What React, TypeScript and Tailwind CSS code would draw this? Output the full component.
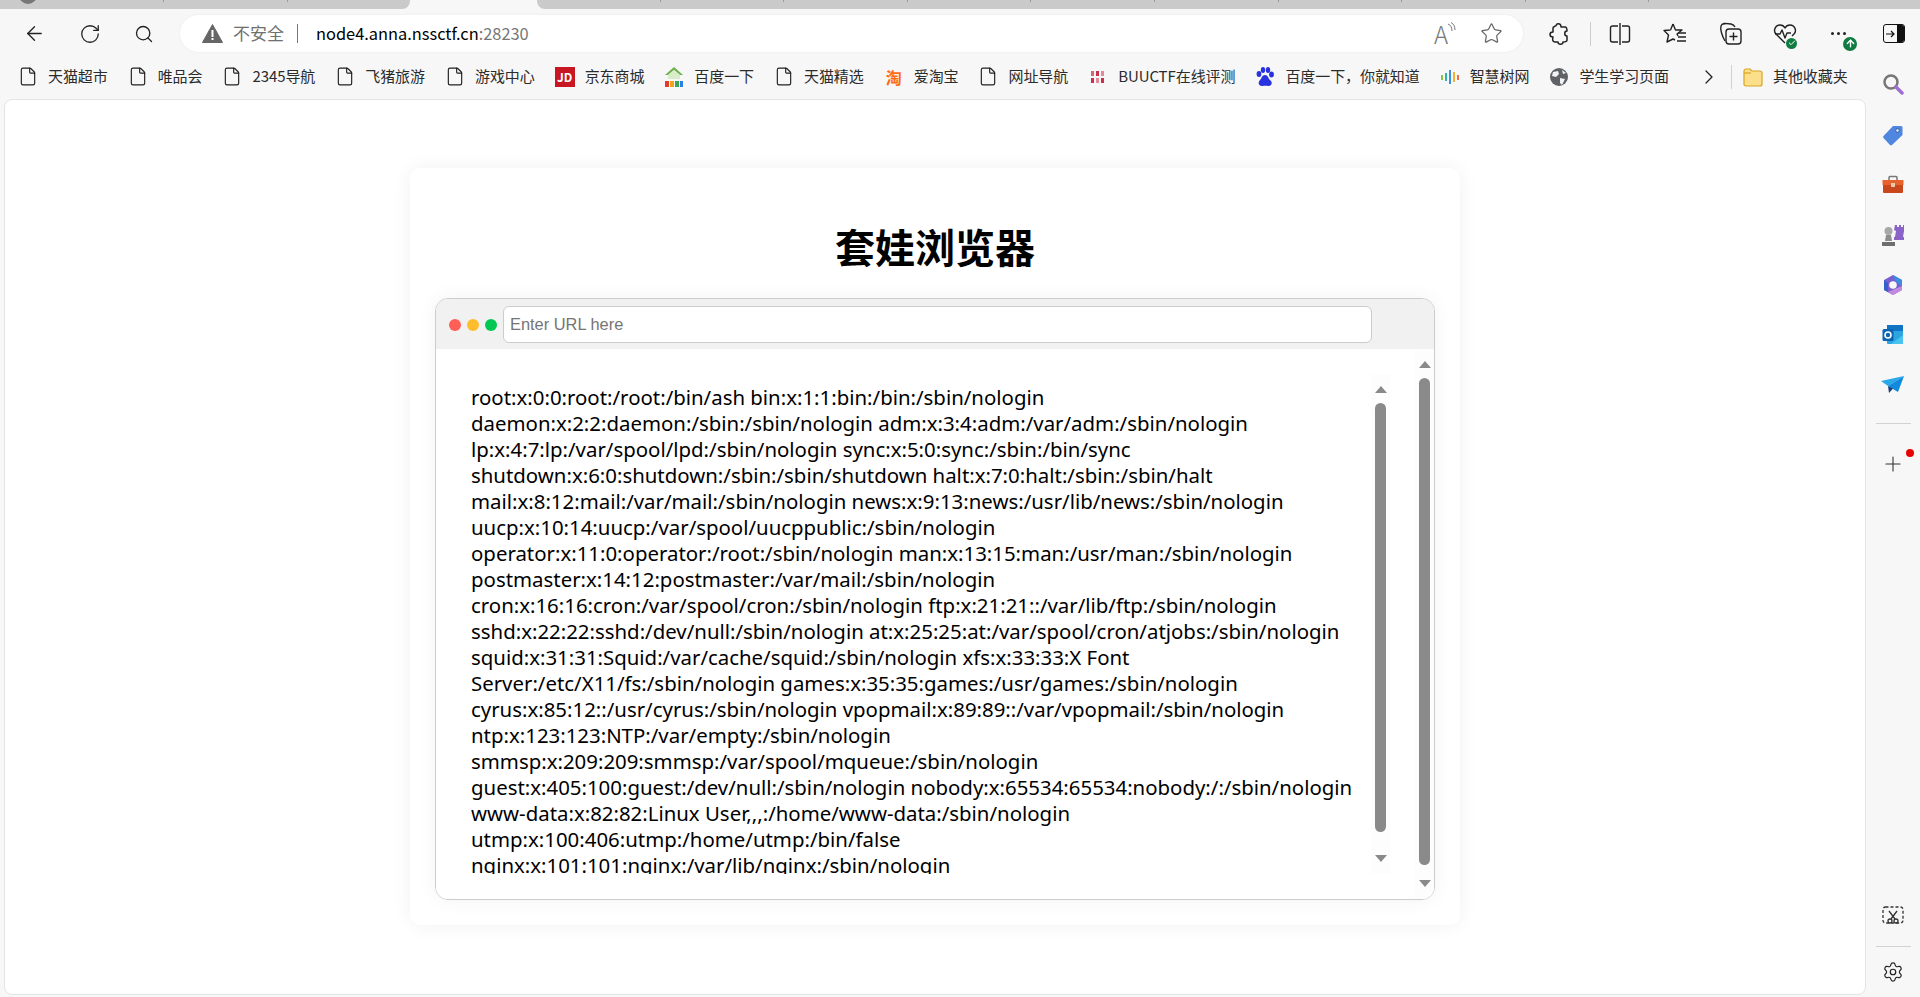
import React from 'react';
import { ArrowLeft, RotateCw, Search, Star, File, ChevronRight, Plus, Settings, Check, ArrowUp } from 'lucide-react';

const passwd = [
  'root:x:0:0:root:/root:/bin/ash bin:x:1:1:bin:/bin:/sbin/nologin',
  'daemon:x:2:2:daemon:/sbin:/sbin/nologin adm:x:3:4:adm:/var/adm:/sbin/nologin',
  'lp:x:4:7:lp:/var/spool/lpd:/sbin/nologin sync:x:5:0:sync:/sbin:/bin/sync',
  'shutdown:x:6:0:shutdown:/sbin:/sbin/shutdown halt:x:7:0:halt:/sbin:/sbin/halt',
  'mail:x:8:12:mail:/var/mail:/sbin/nologin news:x:9:13:news:/usr/lib/news:/sbin/nologin',
  'uucp:x:10:14:uucp:/var/spool/uucppublic:/sbin/nologin',
  'operator:x:11:0:operator:/root:/sbin/nologin man:x:13:15:man:/usr/man:/sbin/nologin',
  'postmaster:x:14:12:postmaster:/var/mail:/sbin/nologin',
  'cron:x:16:16:cron:/var/spool/cron:/sbin/nologin ftp:x:21:21::/var/lib/ftp:/sbin/nologin',
  'sshd:x:22:22:sshd:/dev/null:/sbin/nologin at:x:25:25:at:/var/spool/cron/atjobs:/sbin/nologin',
  'squid:x:31:31:Squid:/var/cache/squid:/sbin/nologin xfs:x:33:33:X Font',
  'Server:/etc/X11/fs:/sbin/nologin games:x:35:35:games:/usr/games:/sbin/nologin',
  'cyrus:x:85:12::/usr/cyrus:/sbin/nologin vpopmail:x:89:89::/var/vpopmail:/sbin/nologin',
  'ntp:x:123:123:NTP:/var/empty:/sbin/nologin',
  'smmsp:x:209:209:smmsp:/var/spool/mqueue:/sbin/nologin',
  'guest:x:405:100:guest:/dev/null:/sbin/nologin nobody:x:65534:65534:nobody:/:/sbin/nologin',
  'www-data:x:82:82:Linux User,,,:/home/www-data:/sbin/nologin',
  'utmp:x:100:406:utmp:/home/utmp:/bin/false',
  'nginx:x:101:101:nginx:/var/lib/nginx:/sbin/nologin',
];

const FileIcon = () => <File size={21} strokeWidth={1.4} className="text-[#222]" />;

const JdIcon = () => (
  <div className="w-5 h-5 bg-[#c91623] text-white text-[12px] font-bold flex items-center justify-center">JD</div>
);

const HouseIcon = () => (
  <svg width="20" height="22" viewBox="0 0 20 22">
    <path d="M1 9 L10 1 L19 9 L16 9 L10 4 L4 9 Z" fill="#6db04f" />
    <path d="M4 9 L10 4 L16 9 V13 H4 Z" fill="#d8ecc9" />
    <rect x="1" y="15" width="4" height="6" fill="#e23b2e" />
    <rect x="6" y="15" width="4" height="6" fill="#f2a31c" />
    <rect x="11" y="15" width="4" height="6" fill="#3aa655" />
    <rect x="16" y="15" width="3" height="6" fill="#2f7fe0" />
  </svg>
);

const TaoIcon = () => <span className="w-5 text-center text-[#ff6a13] text-[16px] font-bold leading-none">淘</span>;

const BuuIcon = () => (
  <svg width="20" height="14" viewBox="0 0 20 14">
    <rect x="3" y="1" width="3" height="5" fill="#d8667a" />
    <rect x="8" y="1" width="3" height="5" fill="#c9304c" />
    <rect x="13" y="1" width="3" height="5" fill="#e08a9a" />
    <rect x="3" y="8" width="3" height="5" fill="#c9304c" />
    <rect x="8" y="8" width="3" height="5" fill="#e08a9a" />
    <rect x="13" y="8" width="3" height="5" fill="#c9304c" />
  </svg>
);

const BaiduIcon = () => (
  <svg width="20" height="22" viewBox="0 0 20 22" fill="#2932e1">
    <ellipse cx="4" cy="8" rx="2.4" ry="3" />
    <ellipse cx="8" cy="4" rx="2.2" ry="3" />
    <ellipse cx="13" cy="4" rx="2.2" ry="3" />
    <ellipse cx="16.5" cy="8.5" rx="2.4" ry="3" />
    <path d="M10 9 C7 9 7 12 5 14 C3 16 3 20 7 20 C9 20 11 19.5 13 20 C17 20.5 18 16 15 14 C13 12 13 9 10 9 Z" />
  </svg>
);

const ZhsIcon = () => (
  <svg width="20" height="16" viewBox="0 0 20 16">
    <rect x="1" y="6" width="2" height="5" fill="#8ac24a" />
    <rect x="5" y="4" width="2" height="8" fill="#29b6a8" />
    <rect x="9" y="1" width="2" height="14" fill="#3f8fe0" />
    <rect x="13" y="3" width="2" height="10" fill="#f2b233" />
    <rect x="17" y="6" width="2" height="5" fill="#e8734a" />
  </svg>
);

const GlobeIcon = () => (
  <svg width="20" height="20" viewBox="0 0 20 20">
    <circle cx="10" cy="10" r="9" fill="#5f6368" />
    <path d="M4 5 L9 4 L10 7 L7 10 L3 9 Z M11 11 L16 12 L13 18 L11 16 Z M13 3 L17 6 L14 7 Z" fill="#f2f2f2" />
  </svg>
);

const FolderIcon = () => (
  <svg width="20" height="20" viewBox="0 0 20 20">
    <path d="M1 4 a2 2 0 0 1 2-2 h4 l2 2 h8 a2 2 0 0 1 2 2 v11 a2 2 0 0 1-2 2 H3 a2 2 0 0 1-2-2 Z" fill="#fbdf8b" stroke="#d9a520" strokeWidth="1.2" />
    <path d="M1 6 H8" stroke="#d9a520" strokeWidth="1.2" />
  </svg>
);

const bookmarks: { label: string; icon: React.ReactNode }[] = [
  { label: '天猫超市', icon: <FileIcon /> },
  { label: '唯品会', icon: <FileIcon /> },
  { label: '2345导航', icon: <FileIcon /> },
  { label: '飞猪旅游', icon: <FileIcon /> },
  { label: '游戏中心', icon: <FileIcon /> },
  { label: '京东商城', icon: <JdIcon /> },
  { label: '百度一下', icon: <HouseIcon /> },
  { label: '天猫精选', icon: <FileIcon /> },
  { label: '爱淘宝', icon: <TaoIcon /> },
  { label: '网址导航', icon: <FileIcon /> },
  { label: 'BUUCTF在线评测', icon: <BuuIcon /> },
  { label: '百度一下，你就知道', icon: <BaiduIcon /> },
  { label: '智慧树网', icon: <ZhsIcon /> },
  { label: '学生学习页面', icon: <GlobeIcon /> },
];

function Bookmark({ label, icon }: { label: string; icon: React.ReactNode }) {
  return (
    <div className="flex items-center gap-[10px] shrink-0">
      <div className="w-5 h-5 flex items-center justify-center">{icon}</div>
      <span className="text-[15px] tracking-[-0.08px] text-[#2b2b2b] whitespace-nowrap">{label}</span>
    </div>
  );
}

function TabStrip() {
  return (
    <div className="h-[9px] shrink-0 flex bg-[#f7f7f7]">
      <div className="w-[410px] bg-[#cacaca] rounded-br-lg flex relative overflow-hidden">
        <div className="absolute left-[19px] top-[-14px] w-[18px] h-[18px] rounded-full bg-[#777]" />
        <div className="w-[164px] h-[2px] border-r border-[#999]" />
        <div className="w-[124px] h-[2px] border-r border-[#999]" />
      </div>
      <div className="w-[127px]" />
      <div className="flex-1 bg-[#cacaca] rounded-bl-lg flex">
        {[...Array(9).keys()].map((i) => (
          <div key={i} className="w-[123.6px] h-[2px] border-r border-[#999]" />
        ))}
      </div>
    </div>
  );
}

function Toolbar() {
  return (
    <div className="h-[45px] shrink-0 flex items-center bg-[#f7f7f7] mt-[2px]">
      <div className="w-[180px] shrink-0 flex items-center pl-[23px] gap-[33px] text-[#222]">
        <ArrowLeft size={23} strokeWidth={1.4} />
        <RotateCw size={22} strokeWidth={1.4} />
        <Search size={20} strokeWidth={1.6} />
      </div>
      <div className="w-[1343px] h-[37px] shrink-0 bg-white rounded-full flex items-center pl-[22px] pr-[20px] shadow-[0_0_3px_rgba(0,0,0,0.06)]">
        <svg width="21" height="19" viewBox="0 0 21 19">
          <path d="M10.5 0.5 L20.5 18.5 H0.5 Z" fill="#666" stroke="#666" strokeLinejoin="round" />
          <rect x="9.5" y="6" width="2" height="7" fill="#fff" />
          <rect x="9.5" y="14" width="2" height="2" fill="#fff" />
        </svg>
        <span className="ml-[10px] text-[17px] leading-[24px] -mt-[2px] text-[#6f6f6f]">不安全</span>
        <div className="ml-[13px] w-px h-[19px] bg-[#777]" />
        <span className="ml-[18px] text-[16.4px] leading-[24px] -mt-[2px] text-black">
          node4.anna.nssctf.cn<span className="text-[#767676]">:28230</span>
        </span>
        <div className="ml-auto flex items-center gap-[26px] text-[#666]">
          <div className="relative w-[20px] h-[24px] text-[#777]">
            <span className="text-[24px] leading-[24px] font-light">A</span>
            <svg className="absolute right-[-2px] top-0" width="9" height="12" viewBox="0 0 9 12" fill="none" stroke="#777" strokeWidth="1">
              <path d="M1 2 C4 3 5 6 5 9 M4 0.5 C7 2 8 5 8 8" />
            </svg>
          </div>
          <Star size={23} strokeWidth={1.3} />
        </div>
      </div>
      <div className="flex-1 flex items-center text-[#222]">
        <div className="ml-[25px] w-[22px] flex justify-center">
          <svg width="22" height="24" viewBox="0 0 22 24" fill="none" stroke="#222" strokeWidth="1.5" strokeLinejoin="round">
            <path d="M9 2 C12 1 13 3 13 5 L17 5 C19 5 19 7 19 9 C16 9 16 14 19 14 L19 18 C19 20 17 20 15 20 C15 23 10 23 10 20 L7 20 C5 20 4 18 5 15 C1 15 1 10 5 10 L5 6 C5 4 8 5 9 2 Z" />
          </svg>
        </div>
        <div className="ml-[20px] w-px h-[24px] bg-[#ccc]" />
        <div className="ml-[18px] w-[22px]">
          <svg width="22" height="24" viewBox="0 0 22 24" fill="none" stroke="#222" strokeWidth="1.4">
            <path d="M9 4 H3.5 a2 2 0 0 0-2 2 V18 a2 2 0 0 0 2 2 H9 M13 4 H18.5 a2 2 0 0 1 2 2 V18 a2 2 0 0 1-2 2 H13 M11 1 V23" />
          </svg>
        </div>
        <div className="ml-[32px] w-[22px]">
          <svg width="24" height="24" viewBox="0 0 24 24" fill="none" stroke="#222" strokeWidth="1.4" strokeLinejoin="round">
            <path d="M10 2 L12.5 8 H19 L14 12 L15 14 M7.5 8 L1 8.5 L5.5 13 L4 20 L10 17 L12 18 M7.5 8 L10 2" />
            <path d="M15 11 H23 M15 15 H23 M14 19 H23" />
          </svg>
        </div>
        <div className="ml-[34px] w-[22px]">
          <svg width="24" height="26" viewBox="0 0 24 26" fill="none" stroke="#222" strokeWidth="1.4">
            <path d="M6 20 C3 15 1 8 2 5 C3 2 6 2 12 3 C14 3.5 15 4 16 6" />
            <rect x="7" y="8" width="15" height="15" rx="3" />
            <path d="M14.5 11.5 V19.5 M10.5 15.5 H18.5" />
          </svg>
        </div>
        <div className="ml-[32px] w-[22px] relative">
          <svg width="24" height="24" viewBox="0 0 24 24" fill="none" stroke="#222" strokeWidth="1.4" strokeLinejoin="round">
            <path d="M12 21 L3 12 C0 9 2 3 7 3 C9 3 11 4 12 6 C13 4 15 3 17 3 C22 3 24 9 21 12 L19 14" />
            <path d="M2 12 H7 L9 8 L12 16 L14 11 H18" />
          </svg>
          <div className="absolute right-[-2px] bottom-[-3px] w-[11px] h-[11px] rounded-full bg-[#107c41] flex items-center justify-center">
            <Check size={8} strokeWidth={3} className="text-white" />
          </div>
        </div>
        <div className="ml-[32px] w-[22px] relative h-[24px] flex items-center justify-center gap-[3px]">
          <div className="w-[3px] h-[3px] rounded-full bg-[#222]" />
          <div className="w-[3px] h-[3px] rounded-full bg-[#222]" />
          <div className="w-[3px] h-[3px] rounded-full bg-[#222]" />
          <div className="absolute right-[-8px] bottom-[-5px] w-[14px] h-[14px] rounded-full bg-[#107c41] flex items-center justify-center">
            <ArrowUp size={11} strokeWidth={3} className="text-white" />
          </div>
        </div>
        <div className="ml-[34px] w-[22px] h-[19px] rounded-[3px] border border-[#111] flex overflow-hidden">
          <div className="flex-1 flex items-center justify-center">
            <svg width="10" height="10" viewBox="0 0 10 10" fill="none" stroke="#111" strokeWidth="1.2">
              <path d="M0 5 H8 M5 2 L8 5 L5 8" />
            </svg>
          </div>
          <div className="w-[7px] bg-[#111]" />
        </div>
      </div>
    </div>
  );
}

function BookmarkBar() {
  return (
    <div className="h-[43px] pb-[2px] shrink-0 flex items-center bg-[#f7f7f7] pl-[18px]">
      <div className="w-[1679px] shrink-0 flex items-center gap-5 overflow-hidden">
        {bookmarks.map((b) => (
          <Bookmark key={b.label} {...b} />
        ))}
      </div>
      <ChevronRight size={24} strokeWidth={1.3} className="text-[#222]" />
      <div className="ml-[10px] w-px h-[24px] bg-[#d0d0d0]" />
      <div className="ml-[11px]">
        <Bookmark label="其他收藏夹" icon={<FolderIcon />} />
      </div>
    </div>
  );
}

function FakeScrollbar({ thumb }: { thumb: string }) {
  return (
    <div className="w-[19px] h-full shrink-0 bg-[#fdfdfd] flex flex-col items-center">
      <div className="mt-[12px] w-0 h-0 border-x-[6.5px] border-x-transparent border-b-[7px] border-b-[#8a8a8a]" />
      <div className={`mt-[10px] w-[11px] rounded-full bg-[#8a8a8a] ${thumb}`} />
      <div className="mt-auto mb-[12px] w-0 h-0 border-x-[6.5px] border-x-transparent border-t-[7px] border-t-[#8a8a8a]" />
    </div>
  );
}

function NestedBrowser() {
  return (
    <div className="h-[602px] border border-[#ccc] rounded-[13px] overflow-hidden flex flex-col shadow-[0_0_20px_rgba(0,0,0,0.05)]">
      <div className="h-[50px] shrink-0 bg-[#f1f1f1] flex items-center pl-[13px]">
        <div className="flex gap-[6px] mt-px">
          <div className="w-3 h-3 rounded-full bg-[#ff5f57]" />
          <div className="w-3 h-3 rounded-full bg-[#ffbd2e]" />
          <div className="w-3 h-3 rounded-full bg-[#00c853]" />
        </div>
        <input
          placeholder="Enter URL here"
          className="ml-[6px] w-[869px] h-[37px] bg-white border border-[#ccc] rounded-[6px] px-[6px] pt-px text-[16.4px] font-['Liberation_Sans',sans-serif] placeholder:text-[#757575] outline-none"
        />
      </div>
      <div className="flex-1 min-h-0 flex items-stretch bg-white">
        <div className="flex-1 min-w-0 pl-[35px] pr-[25px] py-[25px]">
          <div className="h-full flex">
            <div className="flex-1 min-w-0 overflow-hidden pt-[10px] text-[20.4px] leading-[26px] text-black font-['Noto_Sans',sans-serif]">
              {passwd.map((line) => (
                <div key={line} className="whitespace-nowrap">{line}</div>
              ))}
            </div>
            <FakeScrollbar thumb="h-[429px]" />
          </div>
        </div>
        <FakeScrollbar thumb="h-[487px]" />
      </div>
    </div>
  );
}

const SideIcons: React.ReactNode[] = [
  <svg key="search" className="-translate-y-px" width="22" height="22" viewBox="0 0 22 22" fill="none">
    <circle cx="9" cy="9" r="6.5" stroke="#777" strokeWidth="2.5" />
    <path d="M14 14 L20 20" stroke="#a06fd6" strokeWidth="3.5" strokeLinecap="round" />
  </svg>,
  <svg key="tag" width="22" height="22" viewBox="0 0 22 22">
    <path d="M11 2 H19 a1.5 1.5 0 0 1 1.5 1.5 V11 L10 21 a1.5 1.5 0 0 1-2 0 L1.5 14 a1.5 1.5 0 0 1 0-2 Z" fill="#4f86e0" />
    <circle cx="15.5" cy="6.5" r="1.8" fill="#dfe9fa" stroke="#28509a" strokeWidth="0.8" />
  </svg>,
  <svg key="box" width="22" height="22" viewBox="0 0 22 22">
    <path d="M7 6 V3.5 a1 1 0 0 1 1-1 H14 a1 1 0 0 1 1 1 V6" fill="none" stroke="#777" strokeWidth="1.5" />
    <path d="M0.5 6 H21.5 V11 H0.5 Z" fill="#e8622c" />
    <path d="M1 11 H21 V18 a1 1 0 0 1-1 1 H2 a1 1 0 0 1-1-1 Z" fill="#c9481b" />
    <rect x="9" y="9" width="4" height="4" fill="#e9c9b0" />
  </svg>,
  <svg key="chess" width="24" height="24" viewBox="0 0 24 24">
    <path d="M14 2 H16 V4 H18 V2 H20 V4 H22 V2 H23 V8 L22 14 H23 V17 H13 V14 H14 L15 8 L13 7 Z" fill="#8a63c9" />
    <circle cx="7.5" cy="8" r="4" fill="#a8a8a8" />
    <path d="M5 12 H10 L11 18 H4 Z" fill="#8d8d8d" />
    <path d="M1 19 H14 V23 H1 Z" fill="#6e6e6e" />
  </svg>,
  <svg key="m365" width="22" height="22" viewBox="0 0 22 22">
    <path d="M11 1 L20 6 V16 L11 21 L2 16 V6 Z" fill="#7a5fd0" />
    <path d="M11 1 L20 6 V12 L14 8 Z" fill="#3b8fe0" />
    <path d="M2 6 V16 L6 18 L6 9 Z" fill="#3560c9" />
    <path d="M6 18 L11 21 L20 16 L20 12 Z" fill="#c58ae0" />
    <circle cx="11" cy="11" r="3.8" fill="#f7f7f7" />
  </svg>,
  <svg key="outlook" width="22" height="22" viewBox="0 0 22 22">
    <rect x="5" y="1" width="16" height="19" rx="1" fill="#2aa5e0" />
    <rect x="5" y="1" width="16" height="6" fill="#1173c4" />
    <path d="M9 20 L21 11 V20 Z" fill="#49c3ef" />
    <rect x="0.5" y="5" width="11" height="12" rx="1.5" fill="#0a64b4" />
    <circle cx="6" cy="11" r="3" fill="none" stroke="#fff" strokeWidth="1.6" />
  </svg>,
  <svg key="send" width="24" height="20" viewBox="0 0 24 20">
    <path d="M0 6 L23 1 L7 11 Z" fill="#29a8ea" />
    <path d="M7 11 L23 1 L17 17 Z" fill="#1189dc" />
    <path d="M7 11 L8 18 L12 13.5 Z" fill="#14407d" />
  </svg>,
];

function Sidebar() {
  return (
    <div className="w-[54px] shrink-0 flex flex-col items-center bg-[#f7f7f7] mt-[-26px]">
      <div className="flex flex-col items-center gap-[27px]">
        {SideIcons.map((icon, i) => (
          <div key={i} className="w-6 h-[23px] flex items-center justify-center">{icon}</div>
        ))}
      </div>
      <div className="mt-[27px] w-[35px] h-px bg-[#d2d2d2]" />
      <div className="relative mt-[28px]">
        <Plus size={24} strokeWidth={1.1} className="text-[#333]" />
        <div className="absolute right-[-9px] top-[-3px] w-2 h-2 rounded-full bg-[#e60000]" />
      </div>
      <div className="mt-auto flex flex-col items-center">
        <svg width="22" height="20" viewBox="0 0 22 20" fill="none" stroke="#333" strokeWidth="1.3">
          <rect x="1" y="1" width="20" height="16" rx="2.5" strokeDasharray="3 2" />
          <circle cx="8" cy="15" r="2" />
          <circle cx="14" cy="15" r="2" />
          <path d="M9 13 L15 5 M13 13 L7 5" />
        </svg>
        <div className="mt-[20px] w-[35px] h-px bg-[#d2d2d2]" />
        <Settings size={22} strokeWidth={1.3} className="mt-[14px] mb-[14px] text-[#222]" />
      </div>
    </div>
  );
}

export default function App() {
  return (
    <div className="h-screen w-full overflow-hidden flex flex-col bg-[#f7f7f7] font-['Noto_Sans_CJK_SC','Noto_Sans',sans-serif]">
      <TabStrip />
      <Toolbar />
      <BookmarkBar />
      <div className="flex-1 min-h-0 flex">
        <main className="flex-1 min-w-0 ml-[4px] mb-[2px] bg-white rounded-lg border border-[#e4e4e4] flex justify-center pt-[68px]">
          <div className="w-[1050px] h-[757px] rounded-[10px] bg-white shadow-[0_0_20px_rgba(0,0,0,0.06)] px-[25px]">
            <div className="h-[130px] pt-[26px] flex items-center justify-center">
              <h1 className="text-[40px] font-bold text-black">套娃浏览器</h1>
            </div>
            <NestedBrowser />
          </div>
        </main>
        <Sidebar />
      </div>
    </div>
  );
}
